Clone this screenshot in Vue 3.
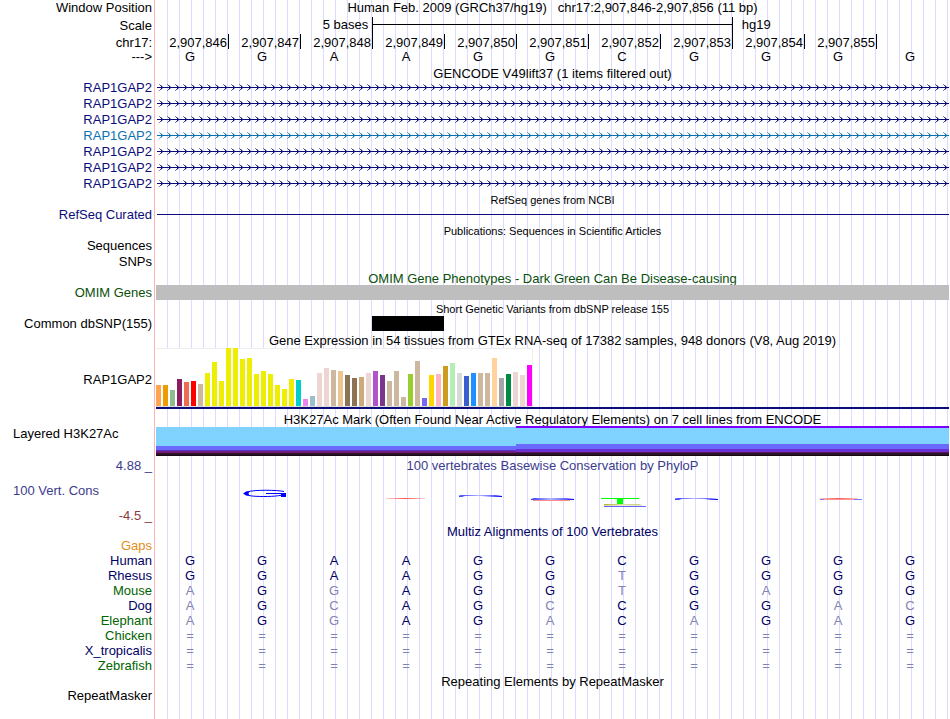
<script setup>
const positions = [
  '2,907,846', '2,907,847', '2,907,848', '2,907,849', '2,907,850',
  '2,907,851', '2,907,852', '2,907,853', '2,907,854', '2,907,855',
]
const bases = 'GGAAGGCGGGG'.split('')

const transcripts = ['navy', 'navy', 'navy', 'teal', 'navy', 'navy', 'navy']

// [height in px, colour] per tissue
const tissues = [
  [21, '#ffa54f'], [21, '#ee9a00'], [16, '#8fbc8f'], [27, '#8b1c62'], [24, '#ee6a50'],
  [25, '#ff0000'], [22, '#cdb79e'], [33, '#eeee00'], [44, '#eeee00'], [25, '#eeee00'],
  [58, '#eeee00'], [58, '#eeee00'], [47, '#eeee00'], [48, '#eeee00'], [32, '#eeee00'],
  [35, '#eeee00'], [32, '#eeee00'], [21, '#eeee00'], [17, '#eeee00'], [27, '#eeee00'],
  [26, '#00cdcd'], [7, '#ee82ee'], [10, '#9ac0cd'], [33, '#eed5d2'], [38, '#eed5d2'],
  [36, '#cdb79e'], [35, '#eec591'], [31, '#8b7355'], [28, '#8b7355'], [29, '#cdaa7d'],
  [33, '#eed5d2'], [35, '#b452cd'], [31, '#7a378b'], [25, '#cdb79e'], [35, '#cdb79e'],
  [9, '#cdb79e'], [32, '#9acd32'], [45, '#cdb79e'], [8, '#7a67ee'], [31, '#ffd700'],
  [32, '#ffb6c1'], [40, '#cd9b1d'], [43, '#b4eeb4'], [33, '#d9d9d9'], [30, '#3a5fcd'],
  [33, '#1e90ff'], [33, '#cdb79e'], [33, '#cdb79e'], [48, '#ffd39b'], [28, '#a6a6a6'],
  [32, '#008b45'], [34, '#eed5d2'], [31, '#eed5d2'], [41, '#ff00ff'],
]

const human = 'GGAAGGCGGGG'
const species = [
  { name: 'Human', tone: 'deep', seq: 'GGAAGGCGGGG' },
  { name: 'Rhesus', tone: 'deep', seq: 'GGAAGGTGGGG' },
  { name: 'Mouse', tone: 'green', seq: 'AGGAGGTGAGG' },
  { name: 'Dog', tone: 'deep', seq: 'AGCAGCCGGAC' },
  { name: 'Elephant', tone: 'green', seq: 'AGGAGACAGAG' },
  { name: 'Chicken', tone: 'green', seq: '===========' },
  { name: 'X_tropicalis', tone: 'deep', seq: '===========' },
  { name: 'Zebrafish', tone: 'green', seq: '===========' },
]
</script>

<template>
  <main class="browser">
    <section class="ruler">
      <div class="row position">
        <div class="label">Window Position</div>
        <h1 class="title">Human Feb. 2009 (GRCh37/hg19)&nbsp;&nbsp; chr17:2,907,846-2,907,856 (11 bp)</h1>
      </div>
      <div class="row scale-row">
        <div class="label">Scale</div>
        <div class="data columns">
          <span class="scale-text">5 bases</span>
          <span class="scale-bar"></span>
          <span class="scale-db">hg19</span>
        </div>
      </div>
      <div class="row coords">
        <div class="label">chr17:</div>
        <div class="data columns cells">
          <span v-for="p in positions" :key="p" class="tick">{{ p }}</span>
        </div>
      </div>
      <div class="row bases">
        <div class="label">---&gt;</div>
        <div class="data columns cells">
          <span v-for="(b, i) in bases" :key="i" class="base">{{ b }}</span>
        </div>
      </div>
    </section>

    <section>
      <h2 class="title wide">GENCODE V49lift37 (1 items filtered out)</h2>
      <div v-for="(tone, i) in transcripts" :key="i" class="row gene" :class="tone">
        <div class="label">RAP1GAP2</div>
        <div class="data inset">
          <svg class="strand" width="100%" height="16" aria-hidden="true">
            <defs>
              <pattern :id="'chevrons' + i" width="8" height="16" patternUnits="userSpaceOnUse">
                <path d="M4 6h1v1h-1zM4 8h1v1h-1z" fill="currentColor" />
                <path d="M3 5h1v1h-1zM3 9h1v1h-1z" fill="currentColor" fill-opacity="0.8" />
                <path d="M2 4h1v1h-1zM2 10h1v1h-1z" fill="currentColor" fill-opacity="0.5" />
                <path d="M5 6h1v1h-1zM5 8h1v1h-1zM4 5h1v1h-1zM4 9h1v1h-1z" fill="currentColor" fill-opacity="0.35" />
              </pattern>
            </defs>
            <rect y="7" width="100%" height="1" fill="currentColor" />
            <rect width="100%" height="16" :fill="`url(#chevrons${i})`" />
          </svg>
        </div>
      </div>
    </section>

    <section>
      <h2 class="title wide small">RefSeq genes from NCBI</h2>
      <div class="row navy">
        <div class="label">RefSeq Curated</div>
        <div class="data inset"><div class="intron"></div></div>
      </div>
    </section>

    <section class="spaced">
      <h2 class="title wide small">Publications: Sequences in Scientific Articles</h2>
      <div class="row gene"><div class="label">Sequences</div></div>
      <div class="row gene"><div class="label">SNPs</div></div>
    </section>

    <section>
      <h2 class="title wide omim">OMIM Gene Phenotypes - Dark Green Can Be Disease-causing</h2>
      <div class="row omim">
        <div class="label">OMIM Genes</div>
        <div class="data omim-bar"></div>
      </div>
    </section>

    <section class="spaced">
      <h2 class="title wide small">Short Genetic Variants from dbSNP release 155</h2>
      <div class="row">
        <div class="label">Common dbSNP(155)</div>
        <div class="data columns"><span class="variant"></span></div>
      </div>
    </section>

    <section class="spaced">
      <h2 class="title wide expression-title">Gene Expression in 54 tissues from GTEx RNA-seq of 17382 samples, 948 donors (V8, Aug 2019)</h2>
      <div class="row">
        <div class="label">RAP1GAP2</div>
        <div class="data expression">
          <div class="chart">
            <span
              v-for="(t, i) in tissues"
              :key="i"
              class="bar"
              :style="{ height: t[0] + 'px', background: t[1] }"
            ></span>
          </div>
          <div class="gene-model"></div>
        </div>
      </div>
    </section>

    <section class="spaced">
      <h2 class="title wide">H3K27Ac Mark (Often Found Near Active Regulatory Elements) on 7 cell lines from ENCODE</h2>
      <div class="row">
        <div class="label left">Layered H3K27Ac</div>
        <div class="data columns layers">
          <span class="layer-a"></span>
          <span class="layer-b"></span>
        </div>
      </div>
    </section>

    <section class="row conservation">
      <div class="label limits">
        <span class="slate">4.88 _</span>
        <span class="slate start">100 Vert. Cons</span>
        <span class="rust">-4.5 _</span>
      </div>
      <div class="data">
        <h2 class="title slate">100 vertebrates Basewise Conservation by PhyloP</h2>
        <svg class="logo" viewBox="0 0 793 51" preserveAspectRatio="none" aria-hidden="true">
          <defs>
            <linearGradient id="blueFade">
              <stop offset="0" stop-color="#3c3cff" />
              <stop offset="0.45" stop-color="#b4b4ff" />
              <stop offset="0.8" stop-color="#6464ff" />
              <stop offset="1" stop-color="#0000ff" />
            </linearGradient>
            <linearGradient id="redFade">
              <stop offset="0" stop-color="#ff6464" stop-opacity="0.3" />
              <stop offset="0.5" stop-color="#ff5050" />
              <stop offset="1" stop-color="#ff6464" stop-opacity="0.3" />
            </linearGradient>
            <linearGradient id="oliveFade">
              <stop offset="0" stop-color="#b4b432" />
              <stop offset="0.5" stop-color="#dcdca0" />
              <stop offset="1" stop-color="#c8c878" />
            </linearGradient>
          </defs>
          <path
            d="M128 19.500C122 18 98 17.500 91 20C86 22 92 24 100 24.300C110 24.800 122 24.500 128 22.500"
            fill="none" stroke="#0000ff" stroke-width="1"
          />
          <path d="M87 21.500L90 19.500H94Q91 21.500 94 23.500H90ZM110 21H130V25H125V22H110Z" fill="#0000ff" />
          <rect x="230" y="26" width="39" height="1" fill="url(#redFade)" />
          <path d="M303 23.500L306 23H339L346 24V25H337L325 24H309L306 25H303Z" fill="url(#blueFade)" />
          <path d="M375 27L378 26H409L418 27V28H375Z" fill="url(#blueFade)" />
          <rect x="377" y="28" width="37" height="1" fill="#ff8c8c" />
          <path d="M445 26H483V27H467V32H461V27H445Z" fill="#00ff00" />
          <path d="M448 32H483L487 33.500H448Z" fill="url(#oliveFade)" />
          <rect x="448" y="34" width="42" height="1" fill="#6464ff" />
          <path d="M519 26.500L522 26H552L562 27V28H555L548 27H526L523 28H519Z" fill="url(#blueFade)" />
          <path d="M664 27H706V28H664Z" fill="#7878ff" />
          <rect x="663" y="26" width="39" height="1" fill="url(#redFade)" />
          <rect x="668" y="27" width="30" height="1" fill="#ff9696" />
        </svg>
      </div>
    </section>

    <section class="deep">
      <h2 class="title wide">Multiz Alignments of 100 Vertebrates</h2>
      <div class="row gaps"><div class="label">Gaps</div></div>
      <div v-for="s in species" :key="s.name" class="row">
        <div class="label" :class="s.tone">{{ s.name }}</div>
        <div class="data columns cells">
          <span
            v-for="(b, i) in s.seq.split('')"
            :key="i"
            class="base"
            :class="{ differs: b !== human[i] }"
          >{{ b }}</span>
        </div>
      </div>
    </section>

    <section>
      <h2 class="title wide">Repeating Elements by RepeatMasker</h2>
      <div class="row"><div class="label">RepeatMasker</div></div>
    </section>
  </main>
</template>

<style>
body {
  margin: 0;
  background: #fff;
}
</style>

<style scoped>
.browser {
  box-sizing: border-box;
  min-height: 100vh;
  padding-right: 1px;
  color: #000;
  font: 13px/14px "Liberation Sans", Arial, sans-serif;
  background:
    linear-gradient(#ffb4b4, #ffb4b4) 154px 0 / 1px 100% no-repeat,
    repeating-linear-gradient(90deg, transparent 0 11px, #dcdcff 11px 12px) 156px 0 / 100% 100% no-repeat;
}
section {
  padding-top: 1px;
}
.spaced {
  padding-top: 2px;
}
.ruler {
  padding: 0 0 1px;
}
.row {
  display: grid;
  grid-template-columns: 154px minmax(0, 1fr);
  column-gap: 2px;
  min-height: 15px;
  align-items: center;
  line-height: 15px;
}
.label {
  padding-right: 2px;
  text-align: right;
  white-space: pre;
}
.label.left {
  align-self: start;
  padding-left: 13px;
  text-align: left;
}
.data {
  align-self: stretch;
}
.inset {
  padding-left: 1px;
}
.title {
  height: 14px;
  margin: 0;
  font-size: 13px;
  font-weight: 400;
  line-height: 16px;
  text-align: center;
  white-space: nowrap;
}
.position {
  height: 16px;
  align-items: start;
}
.position .title {
  line-height: 15px;
}
.wide {
  padding-left: 156px;
}
.title.small {
  font-size: 11px;
  line-height: 14px;
}
.expression-title {
  padding-bottom: 1px;
}
.columns {
  display: grid;
  grid-template-columns: repeat(11, minmax(0, 1fr));
}
.cells {
  padding-left: 1px;
}

.scale-row {
  height: 16px;
  padding: 1px 0;
  line-height: 16px;
}
.scale-row .label {
  line-height: 18px;
}
.scale-text {
  grid-column: 1 / 4;
  padding-right: 4px;
  text-align: right;
}
.scale-bar {
  grid-column: 4 / 9;
  border: solid #000;
  border-width: 0 1px;
  background: linear-gradient(#000, #000) 0 7px / 100% 1px no-repeat;
}
.scale-db {
  grid-column: 9 / 11;
  padding-left: 9px;
}
.coords {
  height: 15px;
  line-height: 17px;
}
.tick {
  height: 15px;
  padding-right: 1px;
  border-right: 1px solid #000;
  text-align: right;
}
.base {
  padding-right: 6px;
  text-align: center;
}

.gene {
  height: 16px;
}
.gene .label {
  align-self: start;
  line-height: 15px;
}
.strand {
  display: block;
}
.navy {
  color: #0c0c78;
}
.teal {
  color: #0c6fae;
}
.intron {
  height: 1px;
  margin-top: 7px;
  background: currentColor;
}
.omim {
  color: #0a4f0a;
}
.omim-bar {
  background: #bebebe;
}
.variant {
  grid-column: 4;
  background: #000;
}

.expression {
  display: flex;
  flex-direction: column;
  align-items: flex-start;
  padding-bottom: 1px;
}
.chart {
  display: flex;
  align-items: flex-end;
  gap: 2px;
  height: 58px;
  border-bottom: 1px solid #dcdcdc;
  background: #fff;
  box-shadow: inset 0 1px #eee, inset -1px 0 #eee;
  padding-right: 1px;
}
.bar {
  width: 5px;
}
.gene-model {
  align-self: stretch;
  height: 2px;
  background: #0c0c78;
}

.layers {
  height: 30px;
}
.layer-a {
  grid-column: 1 / 6;
  background: linear-gradient(
    transparent 1px, #80d2ff 1px 20px, #6a6aff 20px 24px, #5a32c8 24px 25px,
    #701c78 25px 27px, #2d1228 27px 29px, #140a14 29px
  );
}
.layer-b {
  grid-column: 6 / 12;
  background: linear-gradient(
    #7d00ff 2px, #80d2ff 2px 18px, #6a6aff 18px 23px, #6a32d2 23px 26px,
    #5a1464 26px 27px, #2d1228 27px 29px, #140a14 29px
  );
}

.conservation {
  padding-top: 2px;
}
.limits {
  display: flex;
  flex-direction: column;
  align-self: stretch;
  justify-content: space-between;
}
.start {
  padding-left: 13px;
  text-align: left;
}
.slate {
  color: #3c3c8c;
}
.rust {
  color: #8c3c3c;
}
.logo {
  display: block;
  width: 100%;
  height: 51px;
}

.deep {
  color: #000064;
}
.gaps {
  color: #e68c14;
}
.green {
  color: #006400;
}
.differs {
  color: #8282b4;
}
</style>
